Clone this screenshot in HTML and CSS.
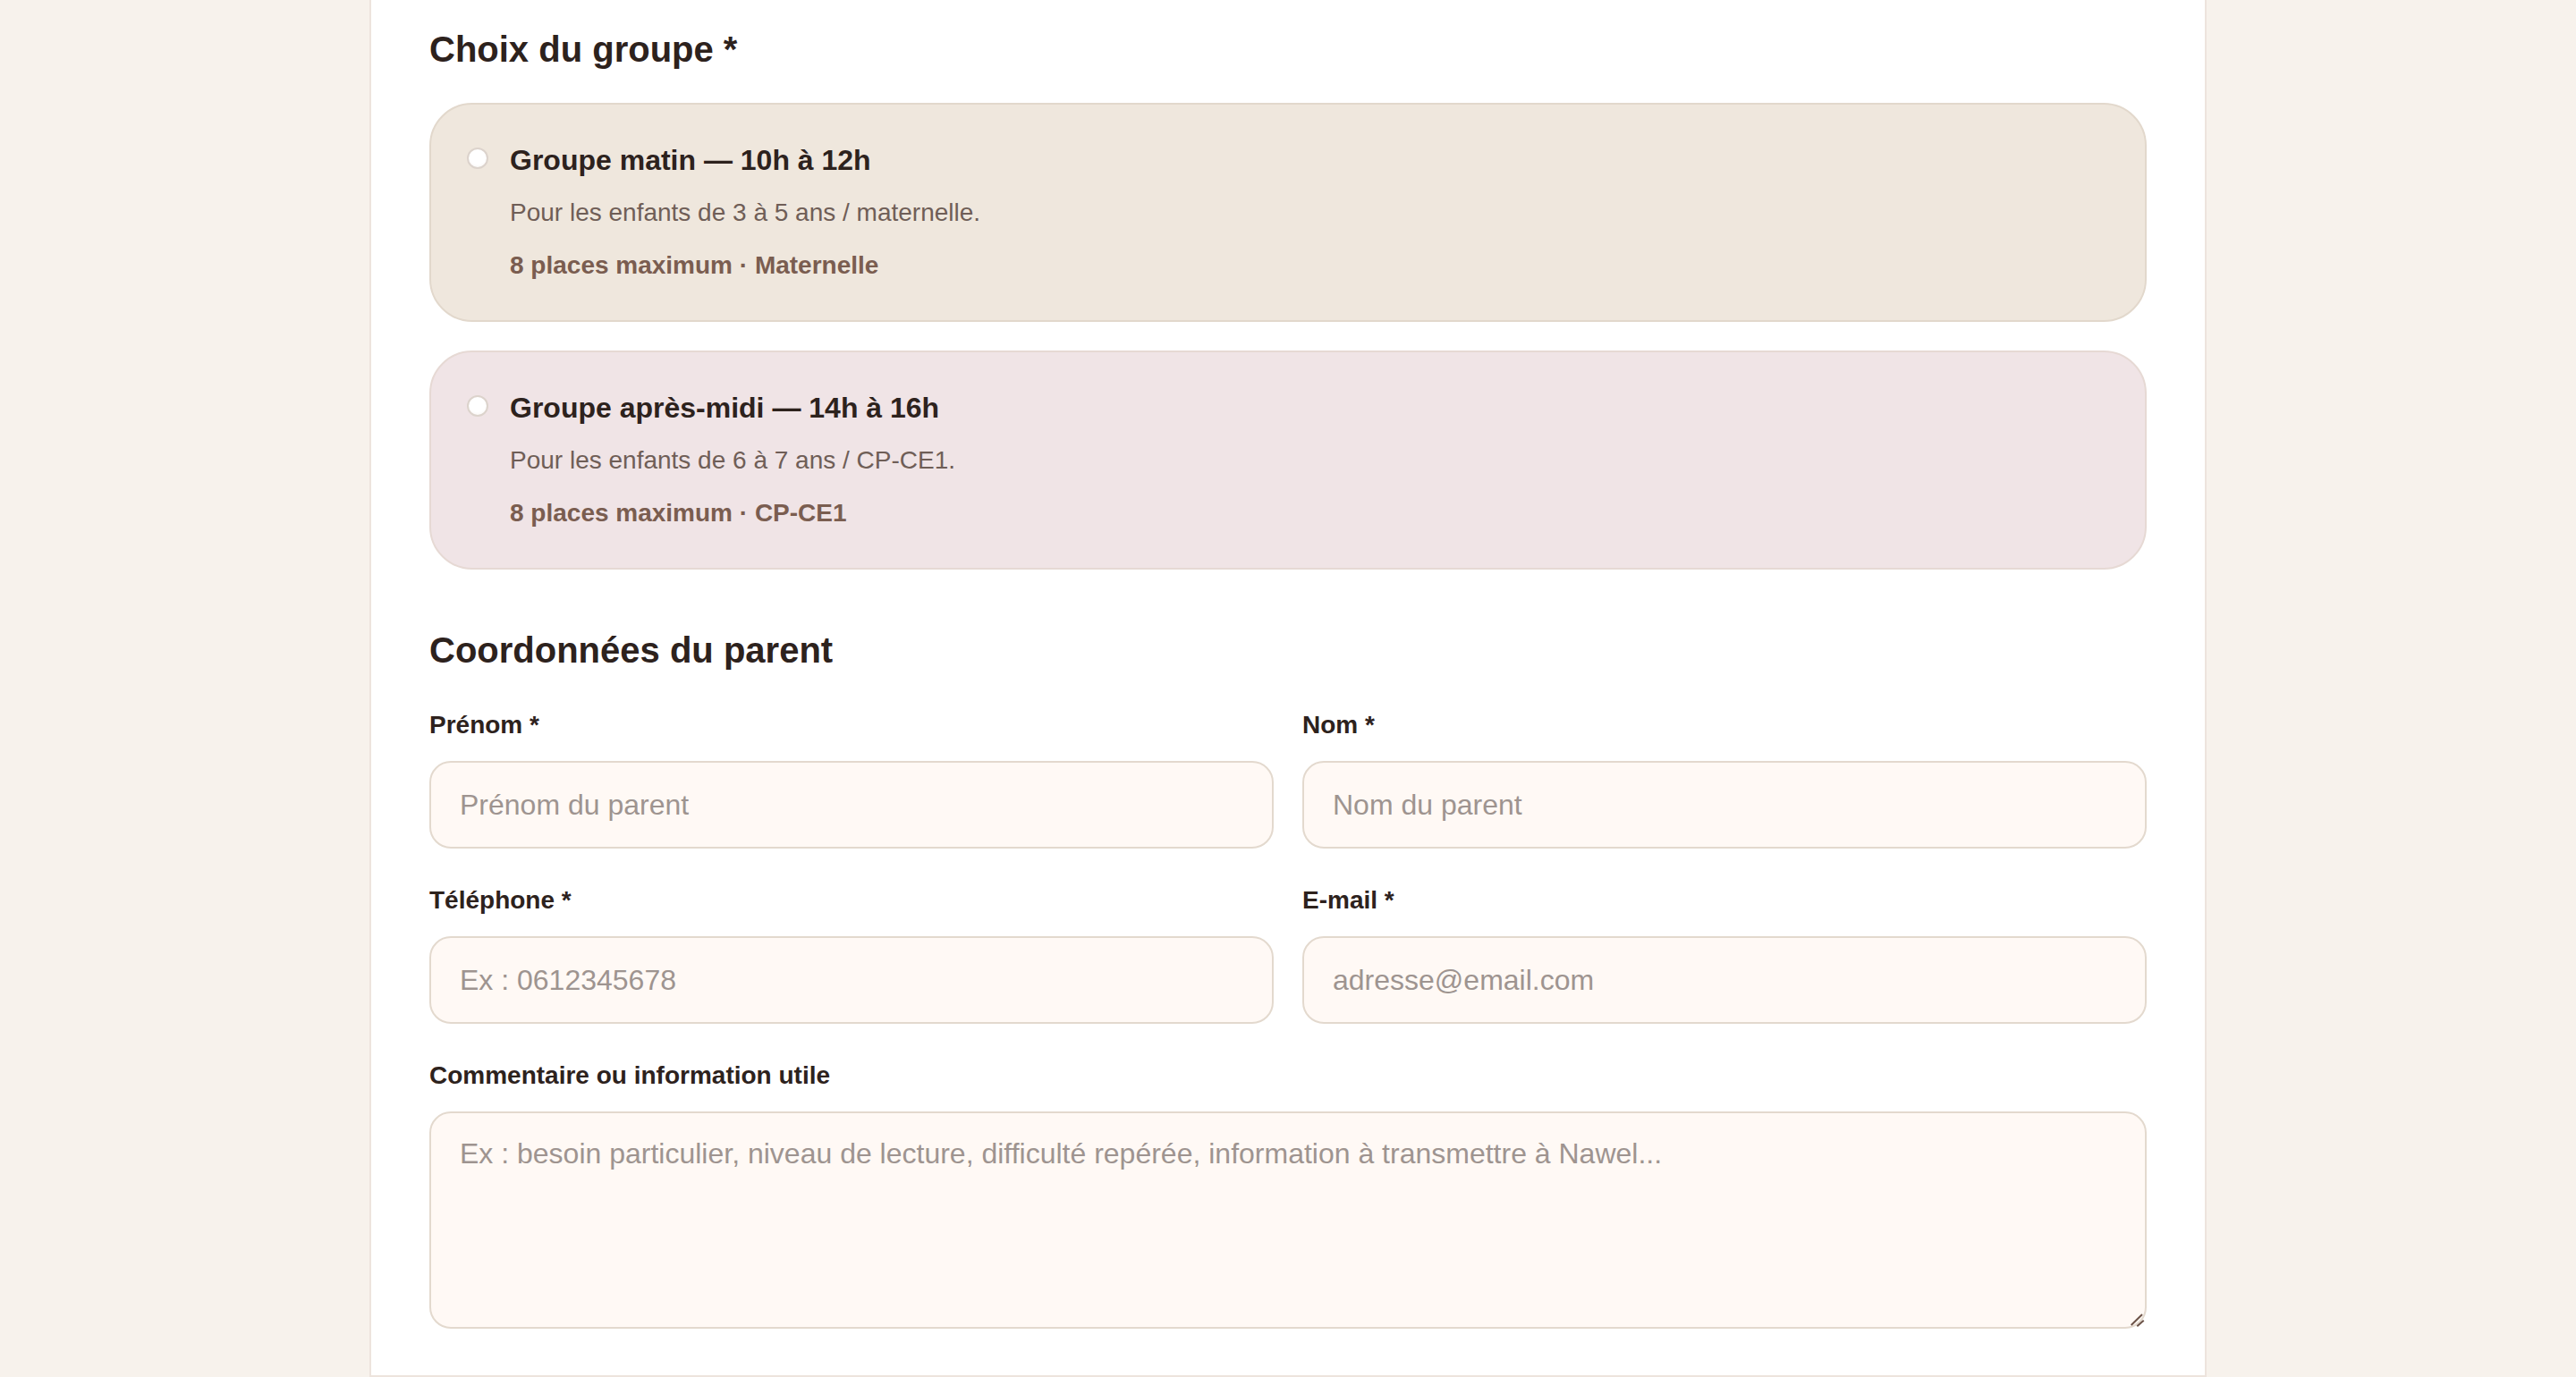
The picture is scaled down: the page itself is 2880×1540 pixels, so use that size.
FILE: index.html
```html
<!DOCTYPE html>
<html lang="fr">
<head>
  <meta charset="UTF-8" />
  <meta name="viewport" content="width=device-width, initial-scale=1.0"/>
  <title>Inscription | Atelier lecture avec Nawel</title>
  <link rel="stylesheet" href="styles.css">
</head>
<body>

  <main class="form-card">
    <!-- Group choice -->
    <section class="form-section">
      <h2>Choix du groupe *</h2>

      <div class="group-list">
        <label class="group-option group-morning">
          <input type="radio" name="groupe" value="matin" />
          <span class="group-text">
            <span class="group-title">Groupe matin — 10h à 12h</span>
            <span class="group-desc">Pour les enfants de 3 à 5 ans / maternelle.</span>
            <span class="group-meta">8 places maximum · Maternelle</span>
          </span>
        </label>

        <label class="group-option group-afternoon">
          <input type="radio" name="groupe" value="apres-midi" />
          <span class="group-text">
            <span class="group-title">Groupe après-midi — 14h à 16h</span>
            <span class="group-desc">Pour les enfants de 6 à 7 ans / CP-CE1.</span>
            <span class="group-meta">8 places maximum · CP-CE1</span>
          </span>
        </label>
      </div>
    </section>

    <!-- Parent details -->
    <section class="form-section section-parent">
      <h2>Coordonnées du parent</h2>

      <div class="field-grid">
        <div class="field">
          <label for="prenom">Prénom *</label>
          <input type="text" id="prenom" placeholder="Prénom du parent" />
        </div>

        <div class="field">
          <label for="nom">Nom *</label>
          <input type="text" id="nom" placeholder="Nom du parent" />
        </div>

        <div class="field">
          <label for="telephone">Téléphone *</label>
          <input type="tel" id="telephone" placeholder="Ex : 0612345678" />
        </div>

        <div class="field">
          <label for="email">E-mail *</label>
          <input type="email" id="email" placeholder="adresse@email.com" />
        </div>

        <div class="field field-full">
          <label for="commentaire">Commentaire ou information utile</label>
          <div class="textarea-wrap">
            <textarea id="commentaire" placeholder="Ex : besoin particulier, niveau de lecture, difficulté repérée, information à transmettre à Nawel..."></textarea>
            <svg class="resize-grip" width="20" height="20" viewBox="0 0 20 20" aria-hidden="true">
              <line x1="2.7" y1="16" x2="15" y2="4" />
              <line x1="9.3" y1="17.3" x2="16.7" y2="10.7" />
            </svg>
          </div>
        </div>
      </div>
    </section>
  </main>

</body>
</html>
```

FILE: styles.css
```css
:root {
  --page-bg: #f7f2ec;
  --card-bg: #ffffff;
  --card-border: #ede4dd;
  --ink: #2d221d;
  --muted: #6f5e57;
  --brown: #7a5d50;
  --placeholder: #9e9490;
  --field-bg: #fff9f5;
  --field-border: #e3d9ce;
  --morning-bg: #efe7dd;
  --morning-border: #e2d8cc;
  --afternoon-bg: #f0e4e6;
  --afternoon-border: #e6d9d4;
}

* {
  box-sizing: border-box;
  margin: 0;
  padding: 0;
}

html, body {
  height: 100%;
  overflow: hidden;
}

body {
  background: var(--page-bg);
  color: var(--ink);
  font-family: "Liberation Sans", Arial, sans-serif;
  display: flex;
  justify-content: center;
}

.form-card {
  width: 2054px;
  min-height: 100%;
  background: var(--card-bg);
  border: 2px solid var(--card-border);
  border-top: 0;
  padding: 31px 65px 120px;
}

h2 {
  font-size: 40px;
  line-height: 48px;
  font-weight: 700;
  color: var(--ink);
}

.section-parent {
  margin-top: 66px;
}

/* Group cards */
.group-list {
  display: flex;
  flex-direction: column;
  gap: 32px;
  margin-top: 36px;
}

.group-option {
  display: flex;
  align-items: flex-start;
  gap: 24px;
  padding: 41px 40px 41px;
  border: 2px solid var(--morning-border);
  border-radius: 48px;
  background: var(--morning-bg);
  cursor: pointer;
}

.group-afternoon {
  background: var(--afternoon-bg);
  border-color: var(--afternoon-border);
}

.group-option input[type="radio"] {
  appearance: none;
  flex-shrink: 0;
  width: 24px;
  height: 24px;
  margin-top: 7px;
  border-radius: 50%;
  border: 2px solid #dcd3cc;
  background: radial-gradient(circle at 50% 40%, #ffffff 55%, #f6f2ef 100%);
}

.group-text {
  display: flex;
  flex-direction: column;
}

.group-title {
  font-size: 32px;
  line-height: 42px;
  font-weight: 700;
  color: var(--ink);
}

.group-desc {
  margin-top: 18px;
  font-size: 28px;
  line-height: 40px;
  color: var(--muted);
}

.group-meta {
  margin-top: 19px;
  font-size: 28px;
  line-height: 40px;
  font-weight: 700;
  color: var(--brown);
}

/* Parent fields */
.field-grid {
  display: grid;
  grid-template-columns: 1fr 1fr;
  column-gap: 32px;
  row-gap: 38px;
  margin-top: 40px;
}

.field-full {
  grid-column: 1 / -1;
}

.field label {
  display: block;
  margin-bottom: 20px;
  font-size: 28px;
  line-height: 40px;
  font-weight: 700;
  color: var(--ink);
}

.field input,
.field textarea {
  display: block;
  width: 100%;
  font-family: "Liberation Sans", Arial, sans-serif;
  font-size: 32px;
  color: var(--ink);
  background: var(--field-bg);
  border: 2px solid var(--field-border);
  border-radius: 24px;
  outline: none;
}

.field input {
  height: 98px;
  padding: 0 32px;
}

.field textarea {
  height: 243px;
  padding: 27px 32px;
  resize: none;
}

.field input::placeholder,
.field textarea::placeholder {
  color: var(--placeholder);
  opacity: 1;
}

.textarea-wrap {
  position: relative;
}

.resize-grip {
  position: absolute;
  right: 0;
  bottom: 0;
  pointer-events: none;
}

.resize-grip line {
  stroke: #6b5247;
  stroke-width: 2;
}
```
